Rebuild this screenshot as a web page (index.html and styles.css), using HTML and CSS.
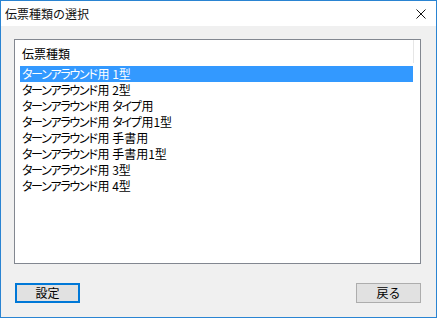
FILE: index.html
```html
<!DOCTYPE html>
<html lang="ja">
<head>
<meta charset="utf-8">
<link rel="stylesheet" href="styles.css">
</head>
<body>
<div class="window">
  <div class="titlebar">
    <span class="title">伝票種類の選択</span>
    <span class="close">
      <svg width="10" height="10" viewBox="0 0 10 10"><path d="M0.5 0.5 L9.5 9.5 M9.5 0.5 L0.5 9.5" stroke="#111" stroke-width="1" fill="none"/></svg>
    </span>
  </div>
  <div class="content">
    <div class="listbox">
      <div class="list-header">伝票種類</div>
      <div class="item selected"><span class="kana">ターンアラウンド</span>用 1型</div>
      <div class="item"><span class="kana">ターンアラウンド</span>用 2型</div>
      <div class="item"><span class="kana">ターンアラウンド</span>用 <span class="kana">タイプ</span>用</div>
      <div class="item"><span class="kana">ターンアラウンド</span>用 <span class="kana">タイプ</span>用1型</div>
      <div class="item"><span class="kana">ターンアラウンド</span>用 手書用</div>
      <div class="item"><span class="kana">ターンアラウンド</span>用 手書用1型</div>
      <div class="item"><span class="kana">ターンアラウンド</span>用 3型</div>
      <div class="item"><span class="kana">ターンアラウンド</span>用 4型</div>
    </div>
    <div class="buttons">
      <button class="btn default">設定</button>
      <button class="btn">戻る</button>
    </div>
  </div>
</div>
</body>
</html>
```
FILE: styles.css
```css
html, body {
  margin: 0;
  padding: 0;
}
body {
  font-family: "Noto Sans CJK JP", "Noto Sans", sans-serif;
  font-size: 12px;
  color: #000;
  background: #f0f0f0;
}
.window {
  box-sizing: border-box;
  width: 437px;
  height: 318px;
  border: 1px solid #2a84d2;
  background: #f0f0f0;
  display: flex;
  flex-direction: column;
}
.titlebar {
  height: 25px;
  background: #fff;
  display: flex;
  align-items: center;
  justify-content: space-between;
  padding: 0 10px 0 4px;
  flex-shrink: 0;
}
.title {
  font-size: 12px;
  line-height: 16px;
  color: #111;
}
.close {
  display: flex;
  align-items: center;
}
.content {
  padding: 13px 15px 0 13px;
  display: flex;
  flex-direction: column;
}
.listbox {
  box-sizing: border-box;
  height: 225px;
  border: 1px solid #828790;
  background: #fff;
  padding: 0 7px 0 5px;
  font-feature-settings: "palt";
}
.list-header {
  height: 23px;
  padding: 6px 0 0 2px;
  box-sizing: border-box;
  line-height: 16px;
  border-right: 1px solid #e6e6e6;
  margin-right: -1px;
  margin-bottom: 3px;
}
.item {
  height: 16px;
  line-height: 16px;
  padding-left: 2px;
  white-space: nowrap;
}
.kana {
  letter-spacing: -1.3px;
  margin-right: 1px;
}
.item.selected {
  background: #3399ff;
  color: #fff;
}
.buttons {
  margin-top: 19px;
  display: flex;
  justify-content: space-between;
  padding-left: 1px;
}
.btn {
  box-sizing: border-box;
  width: 65px;
  height: 20px;
  background: #e1e1e1;
  border: 1px solid #adadad;
  font-family: "Noto Sans CJK JP", "Noto Sans", sans-serif;
  font-size: 12px;
  line-height: 16px;
  padding: 0;
  color: #000;
  margin: 0;
}
.btn.default {
  border: 2px solid #0078d7;
}
```
